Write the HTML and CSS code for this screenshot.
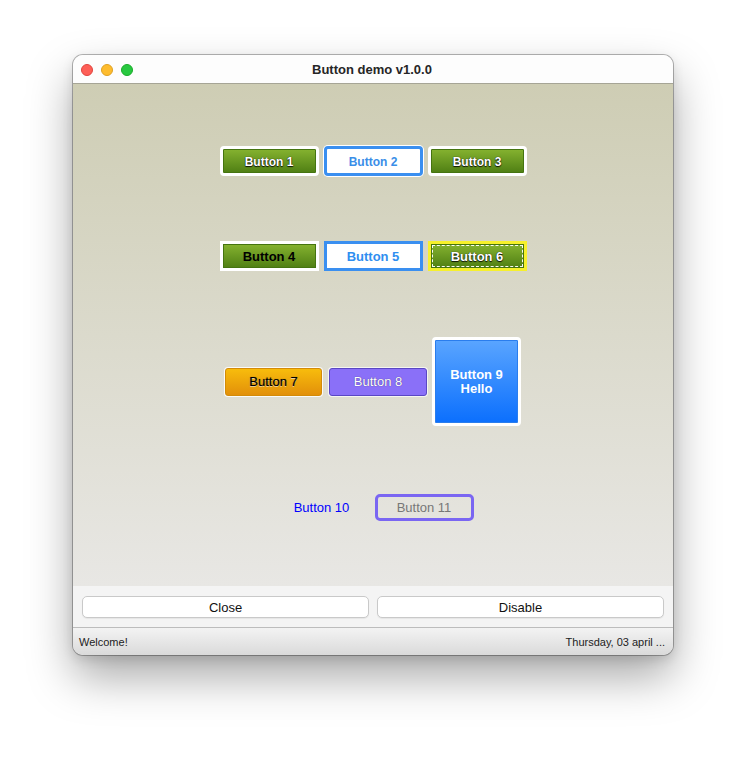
FILE: index.html
```html
<!DOCTYPE html>
<html>
<head>
<meta charset="utf-8">
<title>Button demo v1.0.0</title>
<link rel="stylesheet" href="styles.css">
</head>
<body>
<div class="window">
  <div class="titlebar">
    <div class="lights">
      <span class="light red"></span>
      <span class="light yellow"></span>
      <span class="light green"></span>
    </div>
    <div class="title">Button demo v1.0.0</div>
    <div></div>
  </div>
  <div class="content">
    <div class="row row1">
      <div class="btn green-btn rounded shadow-text small-bold">Button 1</div>
      <div class="btn blue-outline rounded small-bold">Button 2</div>
      <div class="btn green-btn rounded shadow-text small-bold">Button 3</div>
    </div>
    <div class="row row2">
      <div class="btn green-btn square dark-text">Button 4</div>
      <div class="btn blue-outline square bold">Button 5</div>
      <div class="btn green-btn yellow-frame shadow-text bold">Button 6</div>
    </div>
    <div class="row row3">
      <div class="btn orange-btn">Button 7</div>
      <div class="btn purple-btn">Button 8</div>
      <div class="btn big-blue"><span class="line">Button 9</span><span class="line">Hello</span></div>
    </div>
    <div class="row row4">
      <div class="btn link-btn">Button 10</div>
      <div class="btn ghost-btn">Button 11</div>
    </div>
  </div>
  <div class="actions">
    <div class="action">Close</div>
    <div class="action">Disable</div>
  </div>
  <div class="status">
    <span>Welcome!</span>
    <span>Thursday, 03 april ...</span>
  </div>
</div>
</body>
</html>
```

FILE: styles.css
```css
* { box-sizing: border-box; }

html, body { background: #ffffff; }

body {
  margin: 0;
  min-height: 758px;
  padding: 55px 0 0 73px;
  font-family: "Liberation Sans", Arial, sans-serif;
}

.window {
  width: 600px;
  height: 600px;
  border-radius: 10px;
  overflow: hidden;
  display: flex;
  flex-direction: column;
  box-shadow: 0 0 0 1px rgba(0,0,0,0.28), 0 22px 45px rgba(0,0,0,0.34), 0 4px 12px rgba(0,0,0,0.12);
}

.titlebar {
  height: 29px;
  flex: none;
  background: #fdfdfd;
  border-bottom: 1px solid #a6a596;
  display: grid;
  grid-template-columns: 1fr auto 1fr;
  align-items: center;
}

.lights {
  display: flex;
  gap: 8px;
  padding-left: 8px;
  padding-top: 1px;
}

.light {
  width: 12px;
  height: 12px;
  border-radius: 50%;
}
.light.red { background: #fe5f57; border: 1px solid #e0443e; }
.light.yellow { background: #febc2e; border: 1px solid #dea123; }
.light.green { background: #28c840; border: 1px solid #1aab29; }

.title {
  font-size: 13px;
  font-weight: bold;
  color: #262626;
  padding-top: 1px;
  padding-right: 2px;
}

.content {
  flex: 1;
  background: linear-gradient(#cecdb4, #e8e7e4);
  display: flex;
  flex-direction: column;
  align-items: center;
}

.row {
  display: flex;
  align-items: center;
  gap: 5px;
}
.row1 { margin-top: 62px; height: 30px; }
.row2 { margin-top: 65px; height: 30px; }
.row3 { margin-top: 66px; height: 89px; }
.row4 { margin-top: 68px; height: 26px; gap: 4px; }

.btn {
  display: flex;
  align-items: center;
  justify-content: center;
  text-align: center;
  font-size: 13px;
  width: 99px;
  height: 30px;
}

.bold { font-weight: bold; }
.small-bold { font-size: 12px; font-weight: bold; padding-top: 1px; }

.green-btn {
  border: 3px solid #ffffff;
  background: linear-gradient(#86b330, #4e7e13);
  box-shadow: inset 0 0 0 1px #457410;
  color: #ffffff;
}
.rounded { border-radius: 4px; }
.square { border-radius: 0; }

.shadow-text {
  text-shadow: 0 0 1px #000, 0 1px 1px rgba(0,0,0,0.85);
}

.dark-text {
  color: #000;
  font-weight: bold;
}

.blue-outline {
  background: #ffffff;
  border: 3px solid #3a8ff0;
  color: #3a8ee8;
}
.blue-outline.rounded { box-shadow: 0 0 0 1px #ffffff; }
.blue-outline.bold { color: #2f8ef0; }

.yellow-frame {
  border: 3px solid #f6f02c;
  border-radius: 0;
  outline: 1px dashed rgba(255,255,255,0.95);
  outline-offset: -5px;
}

.orange-btn {
  width: 97px;
  height: 28px;
  margin-right: 2px;
  border-radius: 3px;
  border: 1px solid #d38b08;
  background: linear-gradient(#f8bc0c, #e2900a);
  box-shadow: 0 0 0 1px rgba(255,255,255,0.85);
  color: #000;
  text-shadow: 0 0 1px rgba(0,0,0,0.5), 0 1px 0 rgba(255,255,255,0.6);
}

.purple-btn {
  width: 98px;
  height: 28px;
  border-radius: 3px;
  border: 1px solid #5a47c4;
  background: #8a70f8;
  box-shadow: 0 0 0 1px rgba(255,255,255,0.7);
  color: #ffffff;
  text-shadow: 0 0 1px rgba(0,0,0,0.6);
}

.big-blue {
  width: 89px;
  height: 89px;
  flex-direction: column;
  border: 3px solid #ffffff;
  border-radius: 4px;
  background: linear-gradient(#5aa5ff, #0b6ffd);
  box-shadow: inset 0 0 0 1px #2a7ded;
  color: #ffffff;
  font-weight: bold;
  line-height: 14px;
  padding-top: 1px;
}
.big-blue .line { display: block; }

.link-btn {
  width: 98px;
  height: 26px;
  color: #0000ff;
}

.ghost-btn {
  width: 99px;
  height: 27px;
  border: 3px solid #7a66f2;
  border-radius: 5px;
  color: #777777;
}

.actions {
  height: 41px;
  flex: none;
  background: #f4f4f4;
  display: flex;
  gap: 8px;
  padding: 10px 9px 9px 9px;
}

.action {
  flex: 1;
  height: 22px;
  background: #ffffff;
  border: 1px solid #c9c9c9;
  border-radius: 5px;
  display: flex;
  align-items: center;
  justify-content: center;
  font-size: 13px;
  color: #111;
  box-shadow: 0 1px 1px rgba(0,0,0,0.06);
}

.status {
  height: 28px;
  flex: none;
  border-top: 1px solid #bdbdbd;
  background: linear-gradient(#f3f3f3, #dadada);
  display: flex;
  justify-content: space-between;
  align-items: center;
  padding: 0 8px 0 6px;
  font-size: 11px;
  color: #222;
}
```
